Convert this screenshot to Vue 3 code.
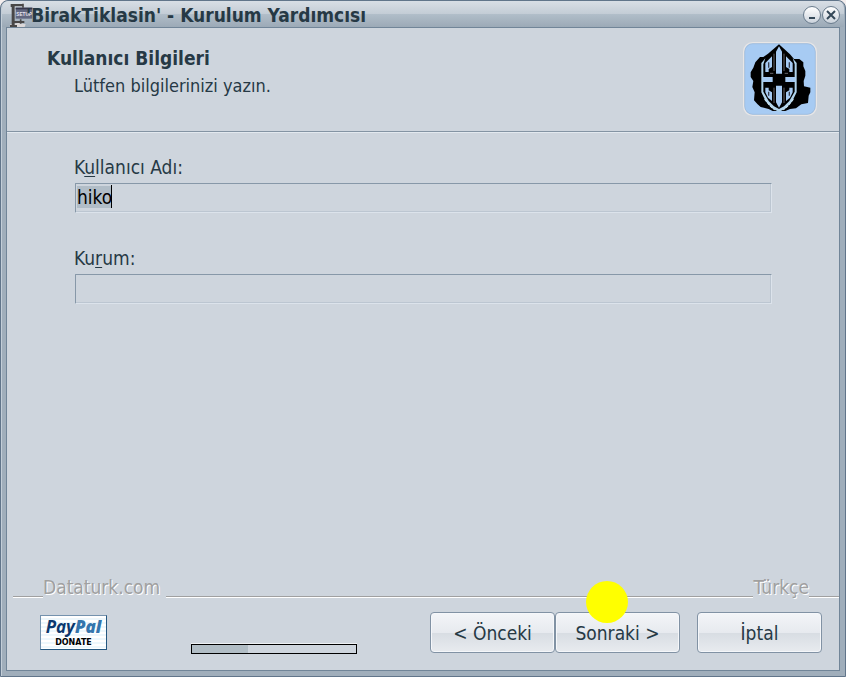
<template>
  <div class="window">
    <header class="titlebar">
      <svg class="app-icon" viewBox="0 0 72 75" aria-hidden="true">
        <path d="M4 64 L28 60 L50 64 L46 74 L2 74 Z" fill="#dcd8d8" />
        <rect x="20" y="14" width="50" height="33" fill="#626780" />
        <rect x="20" y="14" width="50" height="5" fill="#38384c" />
        <text x="22" y="40" class="icon-text">SETUP</text>
        <path d="M5 3 H42 V10 H17 V54 H46 V60 H17 V66 H24 V73 H3 V66 H8 V12 H5 Z" fill="#494747" />
        <path d="M42 2 V14 M35 49 V62" stroke="#494747" stroke-width="5" />
      </svg>
      <h1 class="title">'BirakTiklasin' - Kurulum Yardımcısı</h1>
      <div class="window-buttons">
        <button class="round" type="button" aria-label="Simge durumuna küçült">
          <svg viewBox="0 0 16 16"><path d="M5 11 H11" /></svg>
        </button>
        <button class="round" type="button" aria-label="Kapat">
          <svg viewBox="0 0 16 16"><path d="M4 4 L12 12 M12 4 L4 12" /></svg>
        </button>
      </div>
    </header>

    <form class="client" @submit.prevent>
      <div class="banner">
        <div>
          <h2>Kullanıcı Bilgileri</h2>
          <p>Lütfen bilgilerinizi yazın.</p>
        </div>
        <svg class="logo" viewBox="7 7 222 222" aria-hidden="true">
          <rect x="9" y="9" width="218" height="218" rx="27" fill="#a7cbf3" stroke="#e8e6e6" stroke-width="4" />
          <rect x="12" y="12" width="212" height="212" rx="25" fill="none" stroke="#91a0b2" stroke-width="1" />
          <!-- profiles behind the shield -->
          <path d="M68 52 H58 L44 68 L38 84 L30 98 L30 112 L38 124 L35 142 L42 158 L40 182 L50 193 L60 202 L84 208 L96 214 H134 L148 208 L166 206 L182 194 L202 190 L204 168 L209 158 V144 L190 140 L189 124 L194 108 V94 L188 80 V68 L176 58 H160 L148 44 L115 14 L82 42 Z" />
          <!-- shield outline -->
          <path d="M74 56 L62 70 V158 L76 186 L94 206 L115 217 L136 206 L154 186 L168 158 V70 L156 56 L162 74 V156 L146 184 L130 200 L115 208 L100 200 L84 184 L68 156 V74 Z" fill="#b1d4ec" />
          <!-- centre bar and crossbar -->
          <path d="M106 36 L115 20 L124 36 V102 H106 Z M106 138 H124 V188 L115 204 L106 188 Z" fill="#a7cbf3" />
          <path d="M66 112 H96 V127 H66 Z M134 112 H164 V127 H134 Z" fill="#a7cbf3" />
          <!-- panes -->
          <path d="M74 70 L94 50 V82 L84 88 V97 H74 Z M156 70 L136 50 V82 L146 88 V97 H156 Z M74 144 H84 V152 L94 158 V184 L82 174 L74 158 Z M156 144 H146 V152 L136 158 V184 L148 174 L156 158 Z" fill="#a7cbf3" />
          <path d="M84 68 V84 M146 68 V84 M84 156 V168 M146 156 V168" stroke="#39404f" stroke-width="4" />
          <path d="M100 42 V94 M130 42 V94 M100 144 V190 M130 144 V190 M88 101 H98 M132 101 H142" fill="none" stroke="#66646a" stroke-width="3" />
          <path d="M72 178 L88 198 L102 210 M158 178 L142 198 L128 210" fill="none" stroke="#c6dfed" stroke-width="4" stroke-dasharray="9 4" />
        </svg>
      </div>

      <div class="fields">
        <div class="field">
          <label for="username">K<u>u</u>llanıcı Adı:</label>
          <div class="entry">
            <input id="username" ref="nameInput" v-model="username" type="text" spellcheck="false" />
            <span class="caret"></span>
          </div>
        </div>
        <div class="field">
          <label for="company">Ku<u>r</u>um:</label>
          <div class="entry">
            <input id="company" v-model="company" type="text" />
          </div>
        </div>
      </div>

      <div class="divider">
        <i class="rule short"></i>
        <span class="brand">Dataturk.com</span>
        <i class="rule"></i>
        <span>Türkçe</span>
        <i class="rule short"></i>
      </div>

      <footer class="footer">
        <button class="donate" type="button">
          <span class="paypal">Pay<b>Pal</b></span>
          <span class="donate-text">DONATE</span>
        </button>
        <div class="progress">
          <div class="bar" :style="{ width: progress + '%' }"></div>
        </div>
        <div class="actions">
          <button class="btn" type="button">&lt; Önceki</button>
          <button class="btn" type="submit">Sonraki &gt;<span class="pointer"></span></button>
          <button class="btn cancel" type="button">İptal</button>
        </div>
      </footer>
    </form>
  </div>
</template>

<script setup>
import { ref, onMounted } from 'vue'

const username = ref('hiko')
const company = ref('')
const progress = ref(34)
const nameInput = ref(null)

onMounted(() => {
  nameInput.value.focus()
  nameInput.value.select()
})
</script>

<style>
body {
  background: #f4eeee;
}
</style>

<style scoped>
* {
  box-sizing: border-box;
}

.window {
  display: flex;
  flex-direction: column;
  min-height: 100vh;
  padding: 0 5px 5px;
  border: 1px solid #61758a;
  border-radius: 8px 8px 0 0;
  background: #a0aebb;
  box-shadow: inset 1px 1px 0 #c3ced8;
  color: #263945;
  font-family: "DejaVu Sans Condensed", "DejaVu Sans", sans-serif;
  font-size: 19px;
  line-height: 24px;
}

.titlebar {
  display: flex;
  align-items: center;
  height: 26px;
  margin: 0 -4px;
  padding: 2px 4px 0 7px;
  border-radius: 7px 7px 0 0;
  background: linear-gradient(#d8dee5, #c4cdd6 48%, #b0bdc8 52%, #9caab7);
}

.app-icon {
  flex: none;
  width: 24px;
  height: 25px;
}

.icon-text {
  fill: #e7e6ef;
  font: bold 14px "Liberation Sans", sans-serif;
}

.title {
  flex: 1;
  margin: 0 0 0 -7px;
  font-size: 19px;
  line-height: 24px;
  white-space: nowrap;
}

.window-buttons {
  display: flex;
  gap: 1px;
}

.round {
  width: 18px;
  height: 18px;
  padding: 0;
  border: 1px solid #6a7c8d;
  border-radius: 50%;
  background: linear-gradient(#fff, #cbd3dc);
}

.round svg {
  display: block;
  width: 16px;
  height: 16px;
}

.round path {
  stroke: #344858;
  stroke-width: 2;
}

.client {
  display: flex;
  flex: 1;
  flex-direction: column;
  border: 1px solid #718598;
  background: #ced5dd;
}

.banner {
  display: flex;
  justify-content: space-between;
  padding: 14px 22px 15px 40px;
  border-bottom: 1px solid #8494a3;
  box-shadow: 0 1px 0 #e3e9ef;
}

.banner h2 {
  margin: 4px 0;
  font-size: 19px;
  line-height: 24px;
}

.banner p {
  margin: 0 0 0 27px;
  font-size: 18px;
}

.logo {
  flex: none;
  width: 74px;
  height: 74px;
}

.fields {
  flex: 1;
  padding: 23px 67px 0;
}

.field {
  margin-bottom: 33px;
}

.field label {
  display: block;
  margin-bottom: 4px;
}

u {
  text-decoration-thickness: 1px;
  text-underline-offset: 2px;
}

.entry {
  position: relative;
  height: 30px;
  margin-left: 1px;
}

.entry input {
  display: block;
  width: 100%;
  height: 30px;
  padding: 0 1px 2px;
  border: 1px solid;
  border-color: #8798a8 #dce3eb #dce3eb #8798a8;
  border-radius: 1px;
  outline: none;
  background: transparent;
  box-shadow: inset -1px -1px 0 #bcc6d1;
  color: #000;
  font: inherit;
}

.entry input::selection {
  background: #b1bdc7;
  color: #000;
}

.caret {
  position: absolute;
  top: 2px;
  left: 36px;
  width: 1px;
  height: 23px;
  background: #000;
}

.divider {
  display: flex;
  padding-left: 6px;
  color: #a0a0a0;
  text-shadow: 1px 1px 0 #fff;
}

.brand {
  margin-right: 6px;
}

.rule {
  flex: 1;
  align-self: flex-end;
  height: 2px;
  margin-bottom: 1px;
  border-top: 1px solid #a0a0a0;
  border-bottom: 1px solid #fff;
}

.rule.short {
  flex: 0 0 30px;
}

.footer {
  display: flex;
  align-items: flex-start;
  padding: 13px 17px 16px 33px;
}

.donate {
  display: flex;
  flex: none;
  flex-direction: column;
  align-items: center;
  width: 67px;
  height: 35px;
  margin-top: 3px;
  padding: 0;
  border: 1px solid;
  border-color: #7492ae #245780 #245780 #7492ae;
  background: repeating-linear-gradient(#fff 0 2px, #edf7fc 2px 4px);
}

.paypal {
  color: #0c386e;
  font: italic bold 17px/21px "Open Sans", sans-serif;
}

.paypal b {
  color: #3575ac;
}

.donate-text {
  color: #000;
  font: bold 8px/12px "DejaVu Sans", sans-serif;
}

.progress {
  width: 166px;
  height: 10px;
  margin: 32px 0 0 84px;
  border: 1px solid #000;
  background: #ced5dd;
  box-shadow: 0 -1px 0 #eef1f4;
}

.bar {
  height: 100%;
  background: #b1bdc5;
}

.actions {
  display: flex;
  margin-left: auto;
}

.btn {
  position: relative;
  width: 125px;
  height: 41px;
  padding: 0;
  border: 1px solid #8192a4;
  border-radius: 4px;
  background: linear-gradient(#f3f5f8, #e7eaef 50%, #d8dde3 52%, #e8ebef);
  box-shadow: inset 0 0 0 1px #f5f7fa;
  color: inherit;
  font: inherit;
}

.cancel {
  margin-left: 17px;
}

.pointer {
  position: absolute;
  top: -32px;
  left: 30px;
  width: 42px;
  height: 42px;
  border-radius: 50%;
  background: #ff0;
}
</style>
